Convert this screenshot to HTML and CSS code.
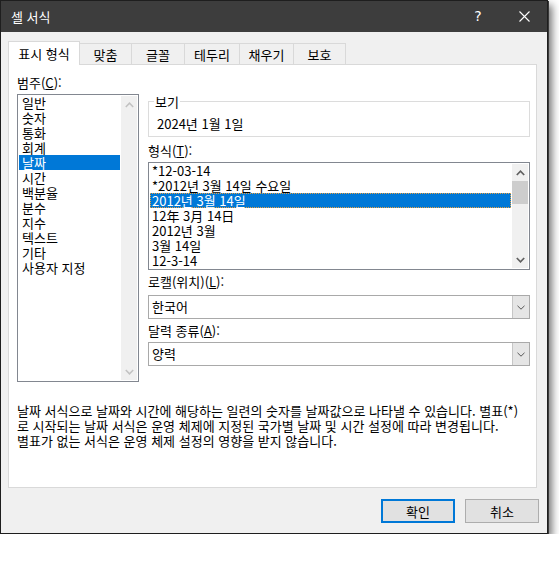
FILE: index.html
```html
<!DOCTYPE html>
<html lang="ko">
<head>
<meta charset="utf-8">
<title>셀 서식</title>
<link rel="stylesheet" href="styles.css">
</head>
<body>
<div class="dialog">
  <div class="titlebar">
    <span class="title">셀 서식</span>
    <span class="tb-btn help">?</span>
    <span class="tb-btn">
      <svg width="11" height="11" viewBox="0 0 11 11"><path d="M0.5 0.5 L10.5 10.5 M10.5 0.5 L0.5 10.5" stroke="#fff" stroke-width="1.1" fill="none"/></svg>
    </span>
  </div>
  <div class="body">
    <div class="tabs">
      <div class="tab active">표시 형식</div>
      <div class="tab">맞춤</div>
      <div class="tab">글꼴</div>
      <div class="tab">테두리</div>
      <div class="tab">채우기</div>
      <div class="tab">보호</div>
    </div>
    <div class="panel">
      <div class="columns">
        <div class="left">
          <div class="label">범주(<u>C</u>):</div>
          <div class="listbox cat">
            <ul class="items">
              <li>일반</li>
              <li>숫자</li>
              <li>통화</li>
              <li>회계</li>
              <li class="sel">날짜</li>
              <li>시간</li>
              <li>백분율</li>
              <li>분수</li>
              <li>지수</li>
              <li>텍스트</li>
              <li>기타</li>
              <li>사용자 지정</li>
            </ul>
            <div class="vscroll">
              <div class="arr"><svg width="9" height="6" viewBox="0 0 9 6"><path d="M0.8 5 L4.5 1.2 L8.2 5" fill="none" stroke="#c2c2c2" stroke-width="1.5"/></svg></div>
              <div class="arr"><svg width="9" height="6" viewBox="0 0 9 6"><path d="M0.8 1 L4.5 4.8 L8.2 1" fill="none" stroke="#c2c2c2" stroke-width="1.5"/></svg></div>
            </div>
          </div>
        </div>
        <div class="right">
          <fieldset class="sample">
            <legend>보기</legend>
            <div class="sample-text">2024년 1월 1일</div>
          </fieldset>
          <div class="label label-fmt">형식(<u>T</u>):</div>
          <div class="listbox fmt">
            <ul class="items">
              <li>*12-03-14</li>
              <li>*2012년 3월 14일 수요일</li>
              <li class="sel">2012년 3월 14일</li>
              <li>12年 3月 14日</li>
              <li>2012년 3월</li>
              <li>3월 14일</li>
              <li>12-3-14</li>
            </ul>
            <div class="vscroll">
              <div class="arr"><svg width="9" height="6" viewBox="0 0 9 6"><path d="M0.8 5 L4.5 1.2 L8.2 5" fill="none" stroke="#606060" stroke-width="1.7"/></svg></div>
              <div class="thumb"></div>
              <div class="track"></div>
              <div class="arr"><svg width="9" height="6" viewBox="0 0 9 6"><path d="M0.8 1 L4.5 4.8 L8.2 1" fill="none" stroke="#606060" stroke-width="1.7"/></svg></div>
            </div>
          </div>
          <div class="label label-combo">로캘(위치)(<u>L</u>):</div>
          <div class="combo first">
            <span class="combo-text">한국어</span>
            <span class="combo-btn"><svg width="8" height="5" viewBox="0 0 8 5"><path d="M0.5 0.8 L4 4.2 L7.5 0.8" fill="none" stroke="#555" stroke-width="1"/></svg></span>
          </div>
          <div class="label label-combo">달력 종류(<u>A</u>):</div>
          <div class="combo">
            <span class="combo-text">양력</span>
            <span class="combo-btn"><svg width="8" height="5" viewBox="0 0 8 5"><path d="M0.5 0.8 L4 4.2 L7.5 0.8" fill="none" stroke="#555" stroke-width="1"/></svg></span>
          </div>
        </div>
      </div>
      <p class="desc">날짜 서식으로 날짜와 시간에 해당하는 일련의 숫자를 날짜값으로 나타낼 수 있습니다. 별표(*)<br>로 시작되는 날짜 서식은 운영 체제에 지정된 국가별 날짜 및 시간 설정에 따라 변경됩니다.<br>별표가 없는 서식은 운영 체제 설정의 영향을 받지 않습니다.</p>
    </div>
    <div class="buttons">
      <button class="btn default">확인</button>
      <button class="btn">취소</button>
    </div>
  </div>
</div>
</body>
</html>
```

FILE: styles.css
```css
* { box-sizing: border-box; }
html, body { margin: 0; padding: 0; background: #fff; }
body {
  font-family: "Noto Sans CJK KR", "Noto Sans", sans-serif;
  font-size: 13px;
  line-height: 15px;
  color: #000;
}
.dialog {
  width: 548px;
  height: 534px;
  border: 1px solid #1e1e1e;
  background: #f0f0f0;
  box-shadow: 1px 1px 0 #3a3a3a, 4px 5px 8px rgba(0,0,0,0.55);
  display: flex;
  flex-direction: column;
}
.titlebar {
  height: 31px;
  flex: none;
  background: #3d3d3d;
  color: #fff;
  display: flex;
  align-items: center;
}
.title { flex: 1; padding-left: 10px; }
.tb-btn {
  width: 46px;
  height: 31px;
  display: flex;
  align-items: center;
  justify-content: center;
}
.help { font-family: "DejaVu Sans", sans-serif; font-size: 14px; }
.body { flex: 1; padding: 9px 0 0 0; }
.tabs {
  display: flex;
  align-items: flex-end;
  height: 23px;
  margin-left: 7px;
}
.tab {
  height: 21px;
  padding-top: 3px;
  text-align: center;
  background: #f0f0f0;
  border: 1px solid #d9d9d9;
  border-bottom: none;
  margin-left: -1px;
  width: 53px;
  white-space: nowrap;
}
.tab:first-child { margin-left: 0; }
.tab:nth-child(3) { width: 54px; }
.tab:nth-child(4) { width: 56px; }
.tab:nth-child(5) { width: 55px; }
.tab.active {
  width: 72px;
  height: 24px;
  padding-top: 4px;
  margin-bottom: -1px;
  background: #fff;
  position: relative;
  z-index: 1;
}
.panel {
  margin-left: 7px;
  width: 529px;
  height: 424px;
  border: 1px solid #d9d9d9;
  background: #fff;
  padding: 10px 6px 0 8px;
}
.columns { display: flex; gap: 9px; }
.left { width: 122px; }
.right { width: 382px; padding-top: 19px; }
.label { height: 15px; white-space: nowrap; }
.listbox {
  display: flex;
  border: 1px solid #828790;
  background: #fff;
  overflow: hidden;
}
.cat { margin-top: 4px; height: 288px; }
.fmt { margin-top: 4px; height: 108px; }
.items {
  flex: 1;
  list-style: none;
  margin: 0 1px 0 1px;
  padding: 0;
}
.items li { height: 15px; padding-left: 3px; white-space: nowrap; }
.items li.sel { background: #0078d7; color: #fff; }
.fmt .items li { padding-left: 2px; }
.fmt .items li.sel {
  border: 1px dotted #e8a040;
  padding-left: 1px;
  line-height: 13px;
}
.vscroll {
  width: 16px;
  margin: 1px 1px 1px 0;
  background: #f0f0f0;
  display: flex;
  flex-direction: column;
  justify-content: space-between;
}
.arr {
  height: 17px;
  display: flex;
  align-items: center;
  justify-content: center;
}
.thumb { height: 23px; background: #cdcdcd; }
.track { flex: 1; }
.sample {
  margin: 0;
  padding: 7px 8px 5px 8px;
  border: 1px solid #dcdcdc;
  min-width: 0;
}
.sample legend {
  padding: 0 1px;
  margin-left: -3px;
  line-height: 15px;
}
.sample-text { height: 15px; }
.label-fmt { margin-top: 6px; }
.label-combo { margin-top: 4px; }
.combo {
  display: flex;
  height: 24px;
  margin-top: 4px;
  border: 1px solid #a9a9a9;
  background: #fff;
}
.combo.first { margin-top: 6px; }
.combo-text { flex: 1; padding-left: 3px; line-height: 22px; }
.combo-btn {
  width: 17px;
  background: #e5e5e5;
  border-left: 1px solid #c6c6c6;
  display: flex;
  align-items: center;
  justify-content: center;
}
.desc {
  margin: 21px 0 0 0;
  white-space: nowrap;
}
.buttons {
  display: flex;
  justify-content: flex-end;
  gap: 10px;
  margin-top: 11px;
  padding-right: 8px;
}
.btn {
  width: 74px;
  height: 24px;
  font: inherit;
  color: #000;
  background: #e1e1e1;
  border: 1px solid #adadad;
  padding: 0;
}
.btn.default { border: 2px solid #0078d7; }
```
